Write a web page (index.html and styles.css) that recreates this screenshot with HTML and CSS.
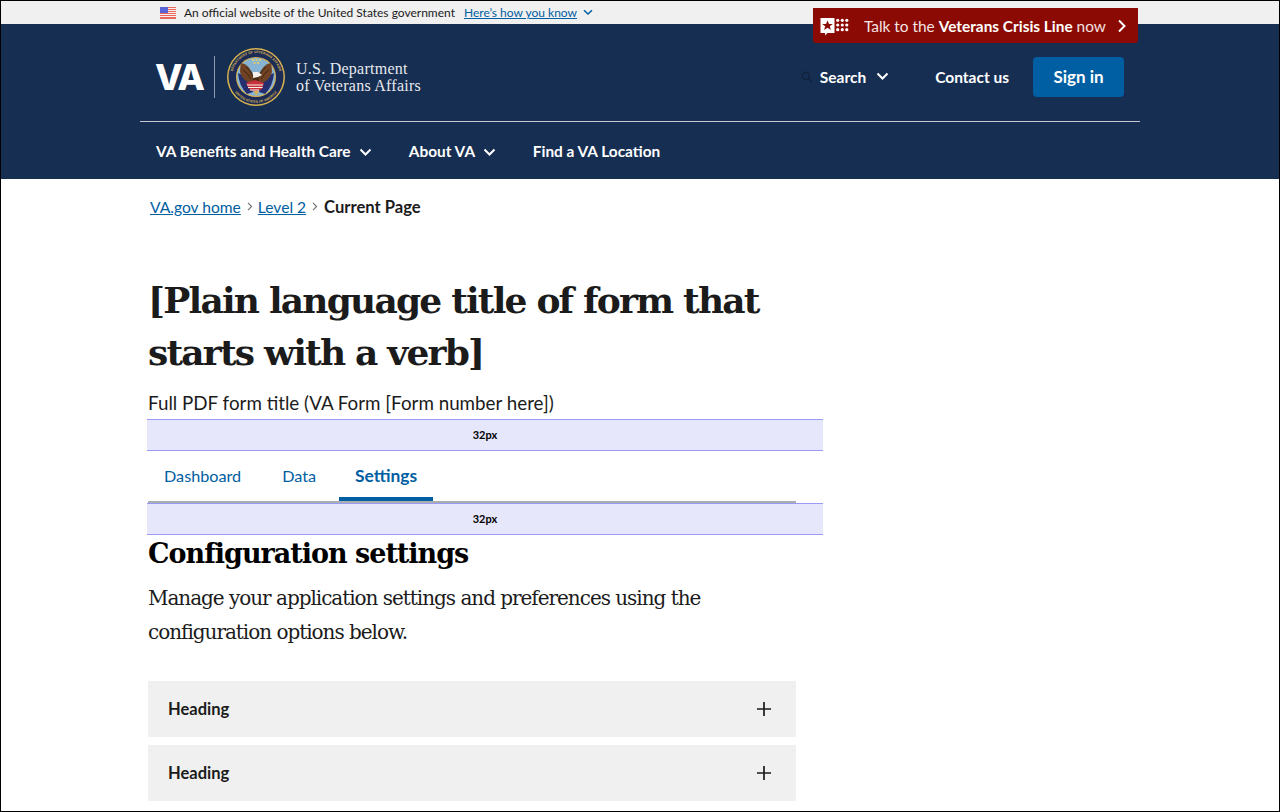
FILE: index.html
```html
<!doctype html>
<html>
<head>
<title>Configuration settings | VA.gov</title>
<link rel="stylesheet" href="styles.css">
</head>
<body>
    <div class="gov-banner">
        <svg class="flag" width="16" height="12" viewBox="0 0 16 12">
            <rect width="16" height="12" fill="#f8eeec"/>
            <rect width="16" height="1" fill="#e8685e"/>
            <rect y="2" width="16" height="1" fill="#e8685e"/>
            <rect y="4" width="16" height="1" fill="#e8685e"/>
            <rect y="6" width="16" height="1" fill="#e8685e"/>
            <rect y="8" width="16" height="1" fill="#e8685e"/>
            <rect y="10" width="16" height="2" fill="#e8685e"/>
            <rect width="8" height="6" fill="#5a63d6"/>
        </svg>
        <span class="gov-text">An official website of the United States government</span>
        <a href="#" class="gov-link">Here&rsquo;s how you know</a>
        <svg class="gov-chevron" width="10" height="7" viewBox="0 0 10 7"><path d="M1 1.2 5 5 9 1.2" fill="none" stroke="#005ea2" stroke-width="1.5"/></svg>
    </div>

    <a href="#" class="crisis-line">
        <svg width="30" height="20" viewBox="0 0 30 20">
            <path d="M.5 2h14v15H7.5L5 19.5V17H.5z" fill="#fff"/>
            <path d="M7.5 4.4 9 8h3.8L9.8 10.300l1.100 3.700-3.400-2.300L4.100 14l1.100-3.700L2.200 8H6z" fill="#8b0a03"/>
            <g fill="#fff">
                <circle cx="17.700" cy="4.300" r="1.600"/><circle cx="22.300" cy="4.300" r="1.600"/><circle cx="26.800" cy="4.300" r="1.600"/>
                <circle cx="17.700" cy="9" r="1.600"/><circle cx="22.300" cy="9" r="1.600"/><circle cx="26.800" cy="9" r="1.600"/>
                <circle cx="17.700" cy="13.700" r="1.600"/><circle cx="22.300" cy="13.700" r="1.600"/><circle cx="26.800" cy="13.700" r="1.600"/>
            </g>
        </svg>
        <span class="crisis-text">Talk to the <b>Veterans Crisis Line</b> now</span>
        <svg width="10" height="14" viewBox="0 0 10 14"><path d="M2 1.500 7.500 7 2 12.500" fill="none" stroke="#fff" stroke-width="2"/></svg>
    </a>

    <header class="site-header">
        <div class="header-top">
            <a href="#" class="logo">
                <span class="logo-va">VA</span>
                <span class="logo-rule"></span>
                <svg class="seal" width="58" height="58" viewBox="-29 -29 58 58">
                    <circle r="29" fill="#d8b24e"/>
                    <circle r="27.500" fill="#1c2c57"/>
                    <path id="seal-top" d="M-23.500 5A24 24 0 1 1 23.500 5" fill="none"/>
                    <path id="seal-bottom" d="M-25.500 5A26 26 0 0 0 25.500 5" fill="none"/>
                    <text class="seal-text"><textPath href="#seal-top" startOffset="50%" text-anchor="middle">DEPARTMENT OF VETERANS AFFAIRS</textPath></text>
                    <text class="seal-text"><textPath href="#seal-bottom" startOffset="50%" text-anchor="middle">UNITED STATES OF AMERICA</textPath></text>
                    <circle r="20" fill="#d8b24e"/>
                    <circle r="19" fill="#86b4d2"/>
                    <path d="M-18-4-7 1-3 15-9 17Q-17 9-18-4z" fill="#232f6e"/>
                    <path d="M18-4 7 1 3 15 9 17Q17 9 18-4z" fill="#232f6e"/>
                    <path d="M-15-14Q-6-13-2 1L-3 7Q-14 4-16-5-16-10-15-14z" fill="#6e4222"/>
                    <path d="M15-14Q6-13 2 1L3 7Q14 4 16-5 16-10 15-14z" fill="#6e4222"/>
                    <path d="M-10-10Q-5-7-3 0M-13-7Q-8-4-5 2M10-10Q5-7 3 0M13-7Q8-4 5 2" fill="none" stroke="#3f2412" stroke-width="1"/>
                    <path d="M-3-3H3L3 6H-3z" fill="#4a2c16"/>
                    <path d="M-3-5H2L6-2 2 0-3 1z" fill="#f5f1e8"/>
                    <path d="M-10 6-1 3 8 6 6 12-1 15-7 12z" fill="#c9323c"/>
                    <path d="M-9 8H7M-8 10.500H6.500M-6 13H3" stroke="#f5f1e8" stroke-width="1"/>
                    <path d="M-2 14H3L0 19z" fill="#d8b24e"/>
                    <g fill="#ecd063">
                        <circle cx="-3" cy="-17" r="1.100"/><circle cx="0.500" cy="-17" r="1.100"/><circle cx="4" cy="-17" r="1.100"/>
                        <circle cx="-1.500" cy="-14" r="1.100"/><circle cx="2" cy="-14" r="1.100"/>
                    </g>
                </svg>
                <span class="logo-name">U.S. Department<br>of Veterans Affairs</span>
            </a>
            <div class="header-actions">
                <button class="nav-btn search-btn">
                    <svg width="12" height="12" viewBox="0 0 12 12"><circle cx="4.800" cy="4.800" r="3.600" fill="none" stroke="#12233f" stroke-width="1.500"/><path d="M7.500 7.500 11 11" stroke="#12233f" stroke-width="1.500"/></svg>
                    <span>Search</span>
                    <svg class="chev" width="13" height="9" viewBox="0 0 13 9"><path d="M1.500 1.500 6.500 6.500 11.500 1.500" fill="none" stroke="#fff" stroke-width="2"/></svg>
                </button>
                <a href="#" class="contact-link">Contact us</a>
                <a href="#" class="sign-in">Sign in</a>
            </div>
        </div>
        <nav class="main-nav">
            <a href="#">VA Benefits and Health Care <svg width="13" height="9" viewBox="0 0 13 9"><path d="M1.500 1.500 6.500 6.500 11.500 1.500" fill="none" stroke="#fff" stroke-width="2"/></svg></a>
            <a href="#">About VA <svg width="13" height="9" viewBox="0 0 13 9"><path d="M1.500 1.500 6.500 6.500 11.500 1.500" fill="none" stroke="#fff" stroke-width="2"/></svg></a>
            <a href="#">Find a VA Location</a>
        </nav>
    </header>

    <main class="content">
        <div class="breadcrumbs">
            <a href="#">VA.gov home</a>
            <svg width="6" height="9" viewBox="0 0 6 9"><path d="M1 .8 4.600 4.500 1 8.200" fill="none" stroke="#71767a" stroke-width="1.200"/></svg>
            <a href="#">Level 2</a>
            <svg width="6" height="9" viewBox="0 0 6 9"><path d="M1 .8 4.600 4.500 1 8.200" fill="none" stroke="#71767a" stroke-width="1.200"/></svg>
            <b>Current Page</b>
        </div>

        <h1>[Plain language title of form that starts with a verb]</h1>
        <p class="subtitle">Full PDF form title (VA Form [Form number here])</p>

        <div class="spacer">32px</div>
        <div class="tabs">
            <a href="#">Dashboard</a>
            <a href="#" class="tab-data">Data</a>
            <a href="#" class="active">Settings</a>
        </div>
        <div class="spacer">32px</div>

        <h2>Configuration settings</h2>
        <p class="intro">Manage your application settings and preferences using the configuration options below.</p>

        <div class="accordion">
            <div class="accordion-row">
                <b>Heading</b>
                <svg width="14" height="14" viewBox="0 0 14 14"><path d="M7 0v14M0 7h14" stroke="#1b1b1b" stroke-width="1.700"/></svg>
            </div>
            <div class="accordion-row">
                <b>Heading</b>
                <svg width="14" height="14" viewBox="0 0 14 14"><path d="M7 0v14M0 7h14" stroke="#1b1b1b" stroke-width="1.700"/></svg>
            </div>
        </div>
    </main>
</body>
</html>
```

FILE: styles.css
```css
*
{
    box-sizing:border-box;
}
html
{
    background:#fff;
}
body
{
    margin:0;
    height:812px;
    overflow:hidden;
    position:relative;
    border:1px solid #000;
    color:#1b1b1b;
    font-family:Lato, sans-serif;
}
a
{
    color:#005ea2;
}
svg
{
    flex:none;
}

/* official site strip */
.gov-banner
{
    height:23px;
    background:#f0f0f0;
    display:flex;
    align-items:center;
    padding-left:159px;
    font-size:12px;
}
.gov-text
{
    margin-left:8px;
}
.gov-link
{
    margin-left:9px;
}
.gov-chevron
{
    margin-left:6px;
}

/* crisis line */
.crisis-line
{
    position:absolute;
    top:7px;
    left:812px;
    width:325px;
    height:35px;
    background:#8b0a03;
    border-radius:0 0 3px 3px;
    color:#fff;
    text-decoration:none;
    display:flex;
    align-items:center;
    padding:0 11px 0 7px;
    font-size:15.4px;
}
.crisis-text
{
    flex:1;
    margin-left:14px;
    white-space:nowrap;
    color:#f3e3e2;
}
.crisis-text b
{
    font-weight:700;
    color:#fff;
}

/* header */
.site-header
{
    background:#162e51;
    height:155px;
    padding:0 139px;
}
.header-top
{
    height:98px;
    display:flex;
    align-items:center;
    justify-content:space-between;
    border-bottom:1px solid #c6cace;
    padding:8px 16px 0;
}
.logo
{
    display:flex;
    align-items:center;
    text-decoration:none;
    color:#fff;
}
.logo-va
{
    font:800 36px/1 Inter, sans-serif;
    letter-spacing:-2.5px;
    width:59px;
    margin-left:-1px;
}
.logo-rule
{
    width:1px;
    height:42px;
    background:#8e9aab;
}
.seal
{
    margin-left:12px;
}
.seal-text
{
    font:bold 3.4px "Liberation Sans", sans-serif;
    fill:#d8b24e;
}
.logo-name
{
    margin-left:11px;
    font:16px/17px "Liberation Serif", serif;
    letter-spacing:.25px;
    color:#e6e9ee;
}
.header-actions
{
    display:flex;
    align-items:center;
}
.nav-btn
{
    background:none;
    border:0;
    padding:0;
    color:#fff;
    display:flex;
    align-items:center;
    font:bold 15.5px Lato, sans-serif;
}
.nav-btn span
{
    margin:0 10px 0 7px;
}
.contact-link
{
    margin-left:46px;
    color:#fff;
    font-weight:bold;
    font-size:15.5px;
    text-decoration:none;
}
.sign-in
{
    margin-left:24px;
    width:91px;
    height:40px;
    background:#005ea2;
    border-radius:4px;
    color:#fff;
    font-weight:bold;
    font-size:17px;
    text-decoration:none;
    display:flex;
    align-items:center;
    justify-content:center;
}
.main-nav
{
    height:57px;
    display:flex;
    align-items:center;
    padding-left:16px;
    gap:36.5px;
}
.main-nav a
{
    color:#fff;
    font-weight:bold;
    font-size:15.4px;
    text-decoration:none;
}
.main-nav svg
{
    margin-left:5px;
}

/* page content */
.content
{
    padding-left:147px;
    width:823px;
}
.breadcrumbs
{
    height:55px;
    display:flex;
    align-items:center;
    gap:5px;
    padding-left:2px;
    font-size:15.6px;
}
.breadcrumbs a
{
    margin-right:1px;
}
.breadcrumbs b
{
    margin-left:1px;
    font-size:16.6px;
}
h1
{
    margin:40px 0 0;
    font:bold 36px/52px "DejaVu Serif", serif;
    letter-spacing:-1.8px;
    color:#1b1b1b;
    width:640px;
}
.subtitle
{
    margin:12px 0 0;
    font-size:18.8px;
    line-height:26px;
    height:29px;
}
.spacer
{
    margin-left:-1px;
    width:676px;
    height:32px;
    padding-bottom:2px;
    background:#e7e7fb;
    border-top:1px solid #9a9af5;
    border-bottom:1px solid #9a9af5;
    color:#000;
    font-size:11px;
    font-weight:bold;
    display:flex;
    align-items:center;
    justify-content:center;
}
.tabs
{
    width:648px;
    height:52px;
    display:flex;
    border-bottom:2px solid #a9aeb1;
}
.tabs a
{
    height:50px;
    padding:0 16px 2px;
    margin-right:9px;
    display:flex;
    align-items:center;
    font-size:16.2px;
    text-decoration:none;
}
.tabs a.tab-data
{
    margin-right:7px;
}
.tabs a.active
{
    font-weight:bold;
    font-size:17.4px;
    padding-top:2px;
    padding-bottom:0;
    border-bottom:4px solid #005ea2;
}
h2
{
    margin:2px 0 0;
    font:bold 27px/34px "DejaVu Serif", serif;
    letter-spacing:-1px;
    color:#000;
}
.intro
{
    margin:10px 0 0;
    width:600px;
    font:20px/34px "DejaVu Serif", serif;
    letter-spacing:-1.03px;
}
.accordion
{
    margin-top:32px;
    width:648px;
    display:flex;
    flex-direction:column;
    gap:8px;
}
.accordion-row
{
    height:56px;
    background:#f0f0f0;
    display:flex;
    align-items:center;
    justify-content:space-between;
    padding:0 25px 0 20px;
    font-size:16.5px;
}
```
